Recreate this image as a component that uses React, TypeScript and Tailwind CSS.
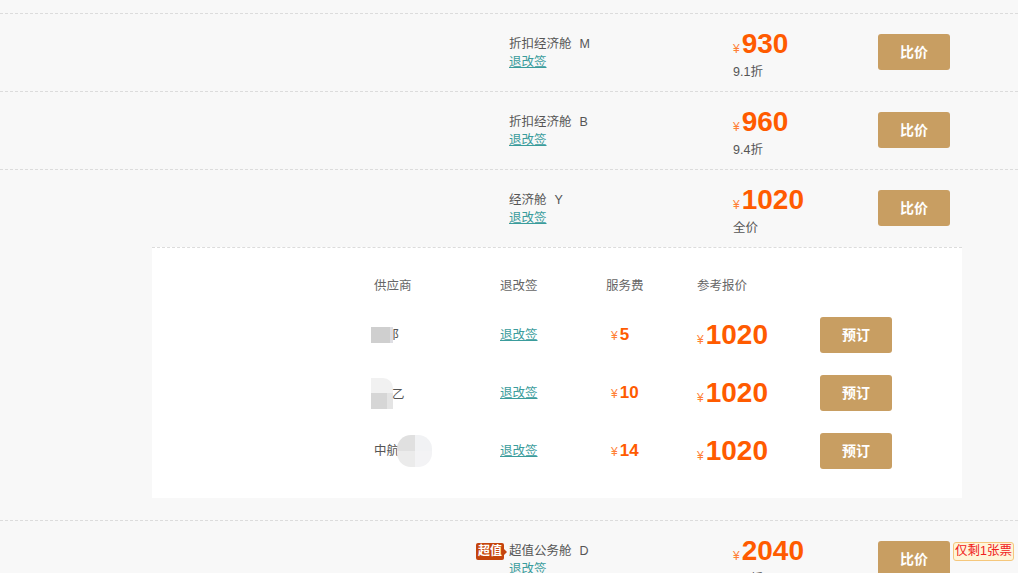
import type { ReactNode } from "react";

const FONT = "font-['Liberation_Sans','Noto_Sans_CJK_SC',sans-serif]";

const cabins = [
  { name: "折扣经济舱", code: "M", price: "930", note: "9.1折" },
  { name: "折扣经济舱", code: "B", price: "960", note: "9.4折" },
  { name: "经济舱", code: "Y", price: "1020", note: "全价" },
];

function Price({ value, size = "big" }: { value: string; size?: "big" | "fee" }) {
  return (
    <div className="flex items-baseline text-[#ff5b00]">
      <span className="mr-[2px] text-[12px] text-[#ff7f35]">¥</span>
      <span
        className={
          size === "big"
            ? "text-[28px] leading-[28px] font-bold"
            : "text-[17px] leading-[20px] font-bold"
        }
      >
        {value}
      </span>
    </div>
  );
}

function CabinRow({
  name,
  code,
  price,
  note,
  badge,
  tag,
}: {
  name: string;
  code: string;
  price: string;
  note: string;
  badge?: boolean;
  tag?: ReactNode;
}) {
  return (
    <div className="flex h-[78px] border-t border-dashed border-[#dcdcdc]">
      <div className="w-[509px] shrink-0" />
      <div className="w-[224px] shrink-0 pt-[21px] text-[12.5px] leading-[18px]">
        <div className="relative text-[#555]">
          {badge && (
            <span className="absolute top-[1px] -left-[33px] flex items-center">
              <span className="rounded-[2px] bg-[#c5440d] px-[2px] text-[12px] leading-[17px] font-bold text-white">
                超值
              </span>
              <span className="h-0 w-0 border-y-[3px] border-l-[3px] border-y-transparent border-l-[#c5440d]" />
            </span>
          )}
          {name}
          <span className="ml-[8px]">{code}</span>
        </div>
        <a className="text-[#3a9c9c] underline">退改签</a>
      </div>
      <div className="w-[145px] shrink-0 pt-[16px]">
        <Price value={price} />
        <div className="mt-[5px] text-[12.5px] leading-[18px] text-[#555]">{note}</div>
      </div>
      <div className="flex items-start pt-[20px]">
        <button className="h-[36px] w-[72px] rounded-[3px] bg-[#c89e62] text-[14px] font-bold text-white">
          比价
        </button>
        {tag}
      </div>
    </div>
  );
}

function Supplier({ idx }: { idx: number }) {
  if (idx === 0)
    return (
      <div className="-ml-[3px] flex items-center">
        <span className="h-[16px] w-[19px] bg-[#cfcfcf]" />
        <span className="h-[16px] w-[3px] bg-[#dedee3]" />
        <span className="-ml-[1px] text-[12.5px] text-[#555]">阝</span>
      </div>
    );
  if (idx === 1)
    return (
      <div className="-ml-[3px] flex items-center">
        <div className="flex flex-col">
          <span className="h-[15px] w-[22px] rounded-tr-[10px] bg-[#f1f1f1]" />
          <div className="flex">
            <span className="h-[16px] w-[16px] bg-[#d6d6d6]" />
            <span className="h-[16px] w-[6px] bg-[#e4e4e4]" />
          </div>
        </div>
        <span className="mt-[4px] -ml-[1px] text-[12.5px] leading-[16px] text-[#555]">乙</span>
      </div>
    );
  return (
    <div className="flex items-center">
      <span className="text-[12.5px] text-[#555]">中航</span>
      <div className="-ml-[2px] grid h-[32px] w-[35px] grid-cols-2 grid-rows-2 overflow-hidden rounded-[14px]">
        <span className="bg-[#e0e0e0]" />
        <span className="bg-[#f1f2f4]" />
        <span className="bg-[#ebebeb]" />
        <span className="bg-[#f3f3f5]" />
      </div>
    </div>
  );
}

const suppliers = [
  { fee: "5", price: "1020" },
  { fee: "10", price: "1020" },
  { fee: "14", price: "1020" },
];

export default function App() {
  return (
    <div className={"min-h-screen w-[1018px] overflow-hidden bg-[#f8f8f8] " + FONT}>
      <div className="h-[13px]" />
      {cabins.map((c) => (
        <CabinRow key={c.code} {...c} />
      ))}

      <div className="mb-[22px] ml-[152px] w-[810px] border-t border-dashed border-[#dcdcdc] bg-white py-[18px] pl-[222px]">
        <div className="flex h-[40px] items-center pt-[1px] text-[12.5px] text-[#666]">
          <div className="w-[126px]">供应商</div>
          <div className="w-[106px]">退改签</div>
          <div className="w-[91px]">服务费</div>
          <div>参考报价</div>
        </div>
        {suppliers.map((s, i) => (
          <div key={i} className="flex h-[58px] items-center">
            <div className="w-[126px]">
              <Supplier idx={i} />
            </div>
            <div className="w-[106px] text-[12.5px]">
              <a className="text-[#3a9c9c] underline">退改签</a>
            </div>
            <div className="w-[91px] pl-[5px]">
              <Price value={s.fee} size="fee" />
            </div>
            <div className="w-[123px]">
              <Price value={s.price} />
            </div>
            <button className="h-[36px] w-[72px] rounded-[3px] bg-[#c89e62] text-[14px] font-bold text-white">
              预订
            </button>
          </div>
        ))}
      </div>

      <CabinRow
        name="超值公务舱"
        code="D"
        price="2040"
        note="3.6折"
        badge
        tag={
          <span className="mt-[1px] ml-[3px] rounded-[3px] border border-[#f5c77c] bg-[#fff4d9] px-[1px] text-[12.5px] leading-[17px] text-[#f02020]">
            仅剩1张票
          </span>
        }
      />
    </div>
  );
}
